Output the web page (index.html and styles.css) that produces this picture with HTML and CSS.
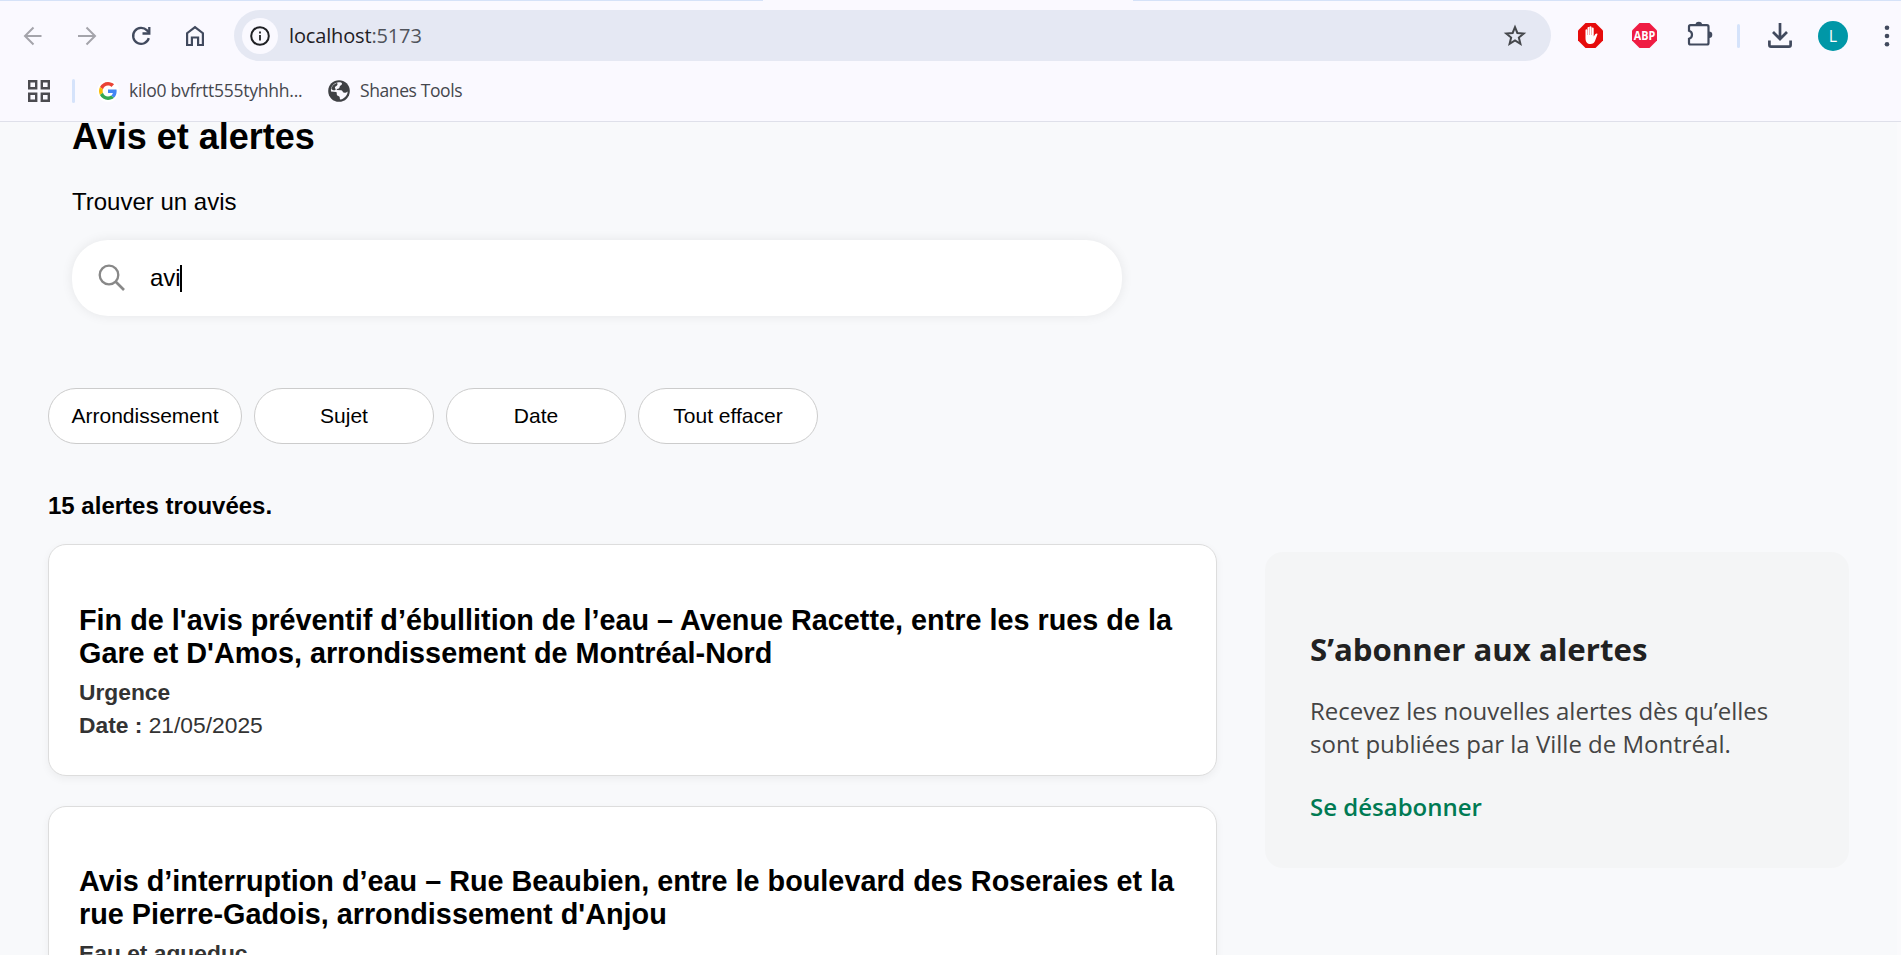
FILE: index.html
```html
<!DOCTYPE html>
<html lang="fr">
<head>
<meta charset="utf-8">
<title>Avis et alertes</title>
<link rel="stylesheet" href="styles.css">
</head>
<body>
<header class="browser">
  <div class="tabstrip"><span class="tab-left"></span><span class="tab-gap"></span><span class="tab-right"></span></div>
  <div class="toolbar">
    <svg class="nav" width="20" height="20" viewBox="0 0 20 20" fill="none" stroke="#a4a4ab" stroke-width="2"><path d="M18.500 10H2M10.500 1.500L2 10l8.500 8.500"/></svg>
    <svg class="nav" width="20" height="20" viewBox="0 0 20 20" fill="none" stroke="#a4a4ab" stroke-width="2"><path d="M1 10h17M9.500 1.500L18 10l-8.500 8.500"/></svg>
    <svg class="nav" width="20" height="20" viewBox="0 0 20 20" fill="none" stroke="#414a5e" stroke-width="2.300"><path d="M17.800 12.200A8 8 0 1 1 16 4.400L18 6.500"/><path d="M18.300 1v6.500H11.500"/></svg>
    <svg class="nav" width="20" height="22" viewBox="0 0 20 22" fill="none" stroke="#414a5e" stroke-width="2.200"><path d="M2.100 20V8.200L10 2.200l7.900 6V20h-4.800v-7.500H6.900V20z"/></svg>
    <div class="omnibox">
      <span class="site-info"><svg width="20" height="20" viewBox="0 0 20 20"><circle cx="10" cy="10" r="8.800" fill="none" stroke="#1f2024" stroke-width="2"/><path d="M9.100 9h1.800v5.500H9.100zM9.100 5.500h1.800v2H9.100z" fill="#1f2024"/></svg></span>
      <span class="url">localhost<span class="port">:5173</span></span>
      <svg class="star" width="24" height="23" viewBox="0 0 24 23" fill="none" stroke="#45474b" stroke-width="2"><path d="M12 3.200l2.350 5.800 6.400.5-4.900 4.100 1.550 6.200L12 16.500l-5.400 3.300 1.550-6.200-4.900-4.100 6.400-.5z"/></svg>
    </div>
    <svg class="ext-hand" width="25" height="25" viewBox="0 0 25 25"><path d="M7.500 0h10L25 7.500v10L17.500 25h-10L0 17.500v-10z" fill="#e60c0c"/><path d="M7.500 15V7.300a1 1 0 0 1 2 0V5a1 1 0 0 1 2 0v-.8a1 1 0 0 1 2 0V5.500a1 1 0 0 1 2.200 0V13.500l1.700-2.400c.9-1.200 2.500-.8 2 .5L17 18c-.8 2-2.300 3-4.500 3-3.300 0-5-2-5-6z" fill="#fff"/><path d="M9.500 6v6M11.500 5v7M13.500 5v7" stroke="#ee6b6b" stroke-width=".5"/></svg>
    <svg class="ext-abp" width="25" height="25" viewBox="0 0 25 25"><path d="M7.500 0h10L25 7.500v10L17.500 25h-10L0 17.500v-10z" fill="#ef1c43"/><text x="12.500" y="16.900" text-anchor="middle" class="abp-text" textLength="21.500" lengthAdjust="spacingAndGlyphs">ABP</text></svg>
    <svg class="puzzle" width="26" height="26" viewBox="0 0 26 26"><path d="M3.500 4.200H20a1.500 1.500 0 0 1 1.500 1.500V22a1.500 1.500 0 0 1-1.500 1.500H3.500A1.500 1.500 0 0 1 2 22v-4.300c4-1.200 4-6.800 0-8V5.700a1.500 1.500 0 0 1 1.500-1.500z" fill="none" stroke="#414a5e" stroke-width="2.200"/><path d="M8.500 4a3.300 3.300 0 0 1 6.600 0zM22 10.500a3.300 3.300 0 0 1 0 6.600z" fill="#414a5e"/></svg>
    <span class="divider tool-divider"></span>
    <svg class="download" width="24" height="25" viewBox="0 0 24 25" fill="none" stroke="#414a5e" stroke-width="2.700"><path d="M12 0v15.500M5 9l7 7 7-7M1.400 17.500v4.500q0 1.600 1.600 1.600h18q1.600 0 1.600-1.600v-4.500"/></svg>
    <span class="avatar">L</span>
    <svg class="menu" width="6" height="22" viewBox="0 0 6 22" fill="#414a5e"><circle cx="3" cy="2.800" r="2.300"/><circle cx="3" cy="11" r="2.300"/><circle cx="3" cy="19.200" r="2.300"/></svg>
  </div>
  <div class="bookmarks">
    <svg class="apps" width="22" height="22" viewBox="0 0 22 22" fill="none" stroke="#4b4b50" stroke-width="2.400"><path d="M1.200 1.200h7v7h-7zM13.800 1.200h7v7h-7zM1.200 13.800h7v7h-7zM13.800 13.800h7v7h-7z"/></svg>
    <span class="divider"></span>
    <span class="google"><svg width="18" height="18" viewBox="0 0 48 48"><path fill="#EA4335" d="M24 9.500c3.540 0 6.710 1.220 9.210 3.600l6.850-6.850C35.900 2.380 30.470 0 24 0 14.620 0 6.510 5.380 2.560 13.220l7.980 6.190C12.430 13.720 17.740 9.500 24 9.500z"/><path fill="#4285F4" d="M46.980 24.550c0-1.570-.15-3.090-.38-4.550H24v9.020h12.940c-.58 2.960-2.260 5.480-4.780 7.180l7.730 6c4.510-4.180 7.090-10.360 7.090-17.650z"/><path fill="#FBBC05" d="M10.530 28.590c-.48-1.450-.76-2.990-.76-4.590s.27-3.140.76-4.590l-7.980-6.190C.92 16.460 0 20.120 0 24c0 3.880.92 7.540 2.560 10.780l7.970-6.190z"/><path fill="#34A853" d="M24 48c6.480 0 11.930-2.130 15.890-5.810l-7.730-6c-2.150 1.450-4.920 2.300-8.160 2.300-6.260 0-11.570-4.220-13.470-9.910l-7.980 6.190C6.510 42.620 14.620 48 24 48z"/></svg></span>
    <span class="bm-text bm-first">kilo0 bvfrtt555tyhhh...</span>
    <svg class="globe" width="22" height="22" viewBox="0 0 22 22"><circle cx="11" cy="11" r="10.800" fill="#3f4145"/><path d="M10.500 2.300c1.800-.1 3.500.3 3.500 1.200 0 1.500-1.200 1.700-2 2.500-.8.900.2 1.700-1.200 2.400-1.400.6-2 .3-2.300 1.600l4.800.2c1.500.2 1.200 2 2.300 2.400 1.500.3 3-.2 4-1.200.1 3-2.300 7-7.300 8.200-.8-.5-.3-2-.8-2.800-.7-1-2.500-.6-2.700-2.200-.2-1.200.3-2-.6-2.500L3 11.500C2.400 7 5.500 3 10.500 2.300z" fill="#faf9ff"/><path d="M3.300 9c.4-2.800 2.800-5.300 5.400-6.100 1.500.5.700 2 .2 2.600-.6.700-2 1-2 2 0 1.100 1.300 1.200.6 2.300-.8 1-3 .4-4.200-.8z" fill="#3f4145"/></svg>
    <span class="bm-text bm-second">Shanes Tools</span>
  </div>
</header>
<main class="page">
  <h1 class="title">Avis et alertes</h1>
  <p class="label">Trouver un avis</p>
  <div class="search">
    <svg width="28" height="28" viewBox="0 0 28 28" fill="none" stroke="#888" stroke-width="2.300"><circle cx="11" cy="11" r="9.300"/><path d="M17.500 17.500l8.500 8.500" stroke-width="2.700"/></svg>
    <span class="query">avi</span><span class="caret"></span>
  </div>
  <div class="filters">
    <button class="pill pill-wide">Arrondissement</button>
    <button class="pill">Sujet</button>
    <button class="pill">Date</button>
    <button class="pill">Tout effacer</button>
  </div>
  <p class="count">15 alertes trouvées.</p>
  <div class="columns">
    <div class="cards">
      <article class="card">
        <h2 class="card-title">Fin de l'avis préventif d’ébullition de l’eau – Avenue Racette, entre les rues de la<br>Gare et D'Amos, arrondissement de Montréal-Nord</h2>
        <p class="meta"><b>Urgence</b></p>
        <p class="meta"><b>Date :</b> 21/05/2025</p>
      </article>
      <article class="card">
        <h2 class="card-title">Avis d’interruption d’eau – Rue Beaubien, entre le boulevard des Roseraies et la<br>rue Pierre-Gadois, arrondissement d'Anjou</h2>
        <p class="meta"><b>Eau et aqueduc</b></p>
      </article>
    </div>
    <aside class="subscribe">
      <h2 class="sub-title">S’abonner aux alertes</h2>
      <p class="sub-text">Recevez les nouvelles alertes dès qu’elles<br>sont publiées par la Ville de Montréal.</p>
      <a class="sub-link">Se désabonner</a>
    </aside>
  </div>
</main>
</body>
</html>
```
FILE: styles.css
```css
* { box-sizing: border-box; }
body { margin: 0; height: 955px; overflow: hidden; display: flex; flex-direction: column; background: #f8f9fb; font-family: "Liberation Sans", Arial, sans-serif; color: #000; }
h1, h2, p { margin: 0; }
svg, .divider, .avatar { flex: none; display: block; }

.browser { flex: none; height: 122px; background: #faf9ff; border-bottom: 1px solid #dfe0ea; font-family: "Open Sans", "Noto Sans", sans-serif; }
.tabstrip { display: flex; height: 1px; background: #d5e2f8; }
.tab-left { width: 763px; }
.tab-gap { width: 370px; background: #faf9ff; }
.toolbar { display: flex; align-items: center; height: 69px; padding-left: 23px; }
.nav { margin-right: 34px; }
.nav:nth-child(4) { margin: 0 29px 0 0; }
.omnibox { display: flex; align-items: center; width: 1317px; height: 51px; border-radius: 26px; background: #e5e8f3; padding: 0 24px 0 8px; }
.site-info { display: flex; align-items: center; justify-content: center; width: 36px; height: 36px; border-radius: 50%; background: #faf9ff; }
.url { margin-left: 11px; font-size: 20px; line-height: 28px; color: #1f2024; letter-spacing: -0.15px; white-space: nowrap; }
.port { color: #50535b; }
.star { margin-left: auto; }
.ext-hand { margin-left: 27px; }
.ext-abp { margin-left: 29px; }
.abp-text { font: 700 11.5px "Open Sans", sans-serif; fill: #fff; }
.puzzle { margin: -4px 0 0 30px; }
.divider { width: 3px; height: 24px; background: #d5e3fb; border-radius: 2px; }
.tool-divider { margin-left: 24px; }
.download { margin-left: 28px; }
.avatar { width: 30px; height: 30px; margin-left: 26px; border-radius: 50%; background: #0097a7; color: #fff; font-size: 16px; line-height: 30px; text-align: center; }
.menu { margin-left: 36px; }
.bookmarks { display: flex; align-items: center; height: 42px; padding-left: 28px; }
.bookmarks .divider { margin-left: 22px; }
.google { display: flex; align-items: center; justify-content: center; width: 22px; height: 22px; margin-left: 22px; border-radius: 50%; background: #fff; }
.bm-text { font-size: 17.5px; line-height: 24px; margin-top: -2px; color: #45474d; white-space: nowrap; }
.bm-first { width: 175px; margin-left: 10px; letter-spacing: -0.25px; }
.globe { margin-left: 24px; }
.bm-second { margin-left: 10px; letter-spacing: -0.4px; }

.page { flex: 1; min-height: 0; overflow: hidden; padding-left: 48px; border-right: 4px solid #fafafc; }
.title { margin: -6px 0 0 24px; font-size: 36px; line-height: 41px; }
.label { margin: 31px 0 0 24px; font-size: 24px; line-height: 28px; }
.search { display: flex; align-items: center; width: 1050px; height: 76px; margin: 24px 0 0 24px; padding-left: 26px; border-radius: 36px; background: #fff; box-shadow: 0 0 12px rgba(0, 0, 0, 0.08); }
.query { margin-left: 24px; font-size: 24px; line-height: 28px; }
.caret { width: 2px; height: 27px; margin-left: -1px; background: #000; }
.filters { display: flex; gap: 12px; margin-top: 72px; }
.pill { width: 180px; height: 56px; padding: 0; border: 1px solid #ccc; border-radius: 28px; background: #fff; color: #000; font: 21px "Liberation Sans", Arial, sans-serif; }
.pill-wide { width: 194px; }
.count { margin-top: 48px; font-size: 24px; line-height: 28px; font-weight: 700; }
.columns { display: flex; align-items: flex-start; gap: 48px; margin-top: 24px; }
.cards { display: flex; flex-direction: column; gap: 30px; width: 1169px; }
.card { height: 232px; padding: 59px 30px 0; border: 1px solid #ddd; border-radius: 18px; background: #fff; box-shadow: 0 3px 9px rgba(0, 0, 0, 0.05); }
.card + .card { padding-top: 58px; }
.card-title { margin-bottom: 6px; font-size: 28.8px; line-height: 33px; white-space: nowrap; }
.meta { font-size: 22.8px; line-height: 33px; color: #333; }
.subscribe { width: 584px; height: 316px; margin-top: 8px; padding: 77px 45px 0; border-radius: 18px; background: #f4f5f6; font-family: "Open Sans", sans-serif; white-space: nowrap; }
.sub-title { font-size: 31.2px; line-height: 41px; color: #212121; }
.sub-text { margin-top: 24px; font-size: 24px; line-height: 33px; color: #444; }
.sub-link { display: block; margin-top: 30px; font-size: 24px; line-height: 33px; font-weight: 600; color: #007a53; }
```
